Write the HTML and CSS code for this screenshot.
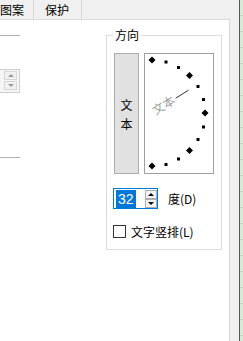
FILE: index.html
```html
<!DOCTYPE html>
<html lang="zh-CN">
    <head>
        <meta charset="UTF-8">
        <title>设置单元格格式</title>
        <link rel="stylesheet" href="styles.css">
    </head>
    <body>
        <div class="window">
            <div class="dialog">
                <div class="tabs">
                    <div class="tab tab-first">图案</div>
                    <div class="tab">保护</div>
                </div>

                <div class="panel">
                    <!-- 左边被截掉的部分 -->
                    <div class="left-col">
                        <div class="rule rule-top"></div>
                        <div class="mini-spin">
                            <span class="mini-btn up"></span>
                            <span class="mini-btn down"></span>
                        </div>
                        <div class="rule rule-bottom"></div>
                    </div>

                    <fieldset class="group">
                        <legend>方向</legend>

                        <div class="dial-row">
                            <div class="vtext-btn">文<br>本</div>
                            <svg class="dial" width="70" height="121" viewBox="0 0 70 121">
                                <rect x="0.5" y="0.5" width="69" height="120" fill="#fff" stroke="#a0a0a0"/>
                                <!-- 大点 -->
                                <polygon points="8,3.5 11.5,7 8,10.5 4.5,7" fill="#000"/>
                                <polygon points="45.5,19 49,22.5 45.5,26 42,22.5" fill="#000"/>
                                <polygon points="61,56.5 64.5,60 61,63.5 57.5,60" fill="#000"/>
                                <polygon points="45.5,94 49,97.5 45.5,101 42,97.5" fill="#000"/>
                                <polygon points="8,109.5 11.5,113 8,116.5 4.5,113" fill="#000"/>
                                <!-- 小点 -->
                                <rect x="20.5" y="7.5" width="3" height="3" fill="#000"/>
                                <rect x="33" y="13" width="3" height="3" fill="#000"/>
                                <rect x="52.5" y="32" width="3" height="3" fill="#000"/>
                                <rect x="58" y="45" width="3" height="3" fill="#000"/>
                                <rect x="58" y="72.5" width="3" height="3" fill="#000"/>
                                <rect x="52.5" y="85" width="3" height="3" fill="#000"/>
                                <rect x="33" y="104.5" width="3" height="3" fill="#000"/>
                                <rect x="20.5" y="110" width="3" height="3" fill="#000"/>
                                <!-- 指针 -->
                                <text x="10" y="64" transform="rotate(-32 8 60)" class="dial-text">文本</text>
                                <line x1="31.7" y1="45.2" x2="44.5" y2="37.2" stroke="#333" stroke-width="1"/>
                            </svg>
                        </div>

                        <div class="degree-row">
                            <div class="spin-box">
                                <span class="spin-value">32</span>
                                <div class="spin-btns">
                                    <span class="spin-btn up"></span>
                                    <span class="spin-btn down"></span>
                                </div>
                            </div>
                            <span class="degree-label">度(D)</span>
                        </div>

                        <label class="check-row">
                            <span class="check-box"></span>
                            <span>文字竖排(L)</span>
                        </label>
                    </fieldset>
                </div>
            </div>
            <div class="edge"></div>
            <div class="sheet"></div>
        </div>
    </body>
</html>
```

FILE: styles.css
```css
body {
    margin: 0;
    font-family: "Noto Sans CJK SC", sans-serif;
    font-size: 12px;
    color: #000;
    overflow: hidden;
}

.window {
    display: flex;
    height: 341px;
}

.dialog {
    width: 239px;
    background-color: #f0f0f0;
    display: flex;
    flex-direction: column;
}

/* 选项卡 */
.tabs {
    display: flex;
    height: 19px;
    line-height: 19px;
}

.tab {
    padding: 0 12px 0 11px;
    border-right: 1px solid #d9d9d9;
}

.tab-first {
    margin-left: -10px;
    padding: 0 9px 0 10px;
}

.panel {
    flex: 1;
    width: 229px;
    background-color: #fff;
    border-top: 1px solid #dadada;
    border-right: 1px solid #d9d9d9;
    display: flex;
    align-items: flex-start;
}

.left-col {
    width: 21px;
    display: flex;
    flex-direction: column;
}

.rule {
    width: 20px;
    height: 1px;
    background-color: #b0b0b0;
}

.rule-top {
    margin-top: 15px;
}

.rule-bottom {
    margin-top: 64px;
}

.mini-spin {
    margin-top: 33px;
    width: 20px;
    height: 24px;
    box-sizing: border-box;
    border: 1px solid #cfcfcf;
    border-left: none;
    background-color: #f5f5f5;
    display: flex;
    flex-direction: column;
    align-items: flex-end;
    padding: 1px 2px 0 0;
    gap: 1px;
}

.mini-btn {
    width: 13px;
    height: 9px;
    box-sizing: border-box;
    border: 1px solid #d6d6d6;
    background-color: #f0f0f0;
    display: flex;
    align-items: center;
    justify-content: center;
}

.mini-btn::after {
    content: "";
    border-left: 3px solid transparent;
    border-right: 3px solid transparent;
}

.mini-btn.up::after {
    border-bottom: 3px solid #9a9a9a;
}

.mini-btn.down::after {
    border-top: 3px solid #9a9a9a;
}

/* 方向 */
.group {
    margin: 8px 0 0 85px;
    padding: 11px 7px 11px 7px;
    border: 1px solid #dcdcdc;
    min-width: 0;
    width: 100px;
}

.group legend {
    padding: 0 2px;
    margin-left: -1px;
    line-height: 14px;
}

.dial-row {
    display: flex;
    gap: 5px;
    height: 121px;
}

.vtext-btn {
    width: 25px;
    height: 121px;
    box-sizing: border-box;
    border: 1px solid #adadad;
    background-color: #e1e1e1;
    display: flex;
    align-items: center;
    justify-content: center;
    text-align: center;
    line-height: 19px;
}

.dial {
    display: block;
}

.dial-text {
    font-family: "Noto Sans CJK SC", sans-serif;
    font-size: 12px;
    fill: #9a9a9a;
}

.degree-row {
    display: flex;
    align-items: center;
    margin: 14px 0 0 -1px;
    height: 21px;
}

.spin-box {
    width: 45px;
    height: 21px;
    box-sizing: border-box;
    border: 1px solid #0078d7;
    background-color: #fff;
    display: flex;
    align-items: center;
    padding-left: 2px;
}

.spin-value {
    background-color: #0078d7;
    color: #fff;
    font-family: "Liberation Sans", sans-serif;
    font-size: 14px;
    line-height: 18px;
    height: 18px;
    padding: 0 2px;
}

.spin-btns {
    margin-left: auto;
    display: flex;
    flex-direction: column;
}

.spin-btn {
    width: 12px;
    height: 9px;
    box-sizing: border-box;
    border: 1px solid #adadad;
    background-color: #f3f3f3;
    display: flex;
    align-items: center;
    justify-content: center;
}

.spin-btn::after {
    content: "";
    border-left: 3px solid transparent;
    border-right: 3px solid transparent;
}

.spin-btn.up::after {
    border-bottom: 3px solid #000;
}

.spin-btn.down::after {
    border-top: 3px solid #000;
}

.degree-label {
    margin-left: 10px;
}

.check-row {
    display: flex;
    align-items: center;
    height: 13px;
    margin: 16px 0 0 -1px;
    gap: 5px;
}

.check-box {
    width: 13px;
    height: 13px;
    box-sizing: border-box;
    border: 1px solid #333;
    background-color: #fff;
}

.edge {
    width: 1px;
    background-color: #4f5c4f;
}

.sheet {
    flex: 1;
    background-color: #d5ebd5;
    background-image: repeating-linear-gradient(to bottom, #d5ebd5 0, #d5ebd5 15px, #c0d8c0 15px, #c0d8c0 16px);
}
```
